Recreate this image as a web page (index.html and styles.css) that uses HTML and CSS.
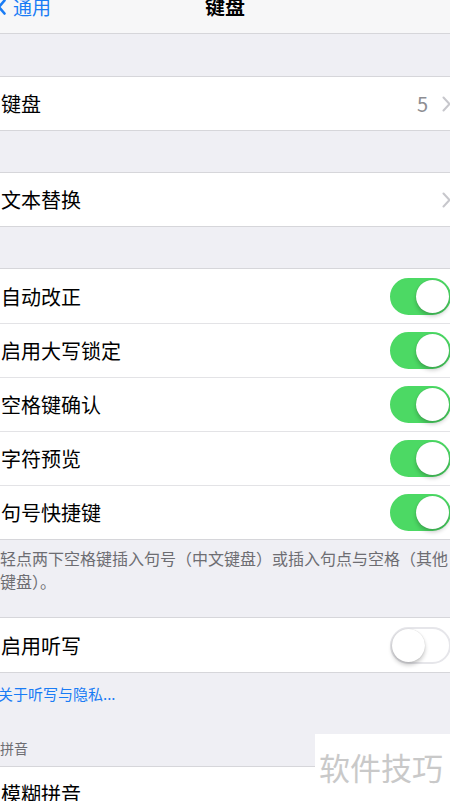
FILE: index.html
```html
<!DOCTYPE html>
<html lang="zh-CN">
<head>
    <meta charset="UTF-8" />
    <meta name="viewport" content="width=device-width, initial-scale=1.0">
    <title>键盘</title>
    <link rel="stylesheet" href="styles.css">
</head>
<body>
<div class="screen">
    <div class="nav">
        <div class="nav-back">
            <svg class="back-chevron" width="8" height="16" viewBox="0 0 8 16">
                <path d="M6.5 1.5 L1 8 L6.5 14.5" fill="none" stroke="#1a7cf5" stroke-width="2.6" stroke-linecap="round" stroke-linejoin="round"/>
            </svg>
            <span>通用</span>
        </div>
        <div class="nav-title">键盘</div>
    </div>

    <div class="group">
        <div class="row">
            <span class="label">键盘</span>
            <span class="value">5</span>
            <svg class="chevron" width="9" height="16" viewBox="0 0 9 16">
                <path d="M1.5 1.5 L7.5 8 L1.5 14.5" fill="none" stroke="#c7c7cc" stroke-width="2" stroke-linecap="round" stroke-linejoin="round"/>
            </svg>
        </div>
    </div>

    <div class="group">
        <div class="row">
            <span class="label">文本替换</span>
            <svg class="chevron" width="9" height="16" viewBox="0 0 9 16">
                <path d="M1.5 1.5 L7.5 8 L1.5 14.5" fill="none" stroke="#c7c7cc" stroke-width="2" stroke-linecap="round" stroke-linejoin="round"/>
            </svg>
        </div>
    </div>

    <div class="group switches">
        <div class="row">
            <span class="label">自动改正</span>
            <span class="switch on"><span class="knob"></span></span>
        </div>
        <div class="row">
            <span class="label">启用大写锁定</span>
            <span class="switch on"><span class="knob"></span></span>
        </div>
        <div class="row">
            <span class="label">空格键确认</span>
            <span class="switch on"><span class="knob"></span></span>
        </div>
        <div class="row">
            <span class="label">字符预览</span>
            <span class="switch on"><span class="knob"></span></span>
        </div>
        <div class="row">
            <span class="label">句号快捷键</span>
            <span class="switch on"><span class="knob"></span></span>
        </div>
    </div>
    <p class="footer">轻点两下空格键插入句号（中文键盘）或插入句点与空格（其他键盘）。</p>

    <div class="group tight switches">
        <div class="row">
            <span class="label">启用听写</span>
            <span class="switch"><span class="knob"></span></span>
        </div>
    </div>
    <a class="footer-link">关于听写与隐私...</a>

    <div class="section-header">拼音</div>
    <div class="group tight">
        <div class="row">
            <span class="label">模糊拼音</span>
        </div>
    </div>

    <div class="watermark">软件技巧</div>
</div>
</body>
</html>
```

FILE: styles.css
```css
* {
    box-sizing: border-box;
    margin: 0;
    padding: 0;
}
html, body {
    background: #efeff4;
}
body {
    font-family: "Noto Sans CJK SC", "Noto Sans", sans-serif;
    color: #000;
}
.screen {
    position: relative;
    width: 450px;
    height: 801px;
    overflow: hidden;
}

/* navigation bar */
.nav {
    position: relative;
    display: flex;
    align-items: flex-start;
    height: 34px;
    background: #f7f7f8;
    border-bottom: 1px solid #d6d6da;
}
.nav-back {
    display: flex;
    align-items: center;
    gap: 7px;
    height: 20px;
    margin-top: -3px;
    margin-left: -2px;
    color: #1a7cf5;
    font-size: 19px;
    line-height: 20px;
}
.back-chevron {
    flex: none;
}
.nav-title {
    position: absolute;
    top: -3px;
    left: 0;
    right: 0;
    text-align: center;
    font-size: 20px;
    line-height: 20px;
    font-weight: 700;
}

/* table groups */
.group {
    margin-top: 42px;
    background: #fff;
    border-top: 1px solid #d6d6da;
    border-bottom: 1px solid #d6d6da;
}
.group + .group {
    margin-top: 41px;
}
.group.tight {
    margin-top: 0;
}
.row {
    display: flex;
    align-items: center;
    height: 53px;
    padding-left: 1px;
    font-size: 20px;
}
.switches .row {
    height: 54px;
}
.row + .row {
    border-top: 1px solid #e3e3e6;
}
.label {
    flex: 1;
}
.value {
    color: #8e8e93;
    margin-right: 14px;
}
.chevron {
    flex: none;
    margin-right: -1px;
}

/* switches */
.switch {
    position: relative;
    flex: none;
    width: 61px;
    height: 37px;
    margin-right: -1px;
    border-radius: 19px;
    background: #fff;
    border: 2px solid #e6e6ea;
}
.switch.on {
    background: #4cd964;
    border-color: #4cd964;
}
.switch .knob {
    position: absolute;
    top: 0;
    left: 0;
    width: 33px;
    height: 33px;
    border-radius: 50%;
    background: #fff;
    box-shadow: 0 3px 4px rgba(0, 0, 0, 0.22), 0 0 1px rgba(0, 0, 0, 0.2);
}
.switch.on .knob {
    left: 24px;
}

/* footers and headers */
.footer {
    padding: 7px 2px 24px 0;
    color: #6d6d72;
    font-size: 16px;
    line-height: 23px;
}
.footer-link {
    display: block;
    padding-top: 11px;
    margin-left: -2px;
    color: #1a7cf5;
    font-size: 15px;
    line-height: 20px;
}
.section-header {
    padding-top: 35px;
    padding-bottom: 9px;
    color: #6d6d72;
    font-size: 14px;
    line-height: 18px;
}

/* watermark overlay */
.watermark {
    position: absolute;
    left: 315px;
    top: 734px;
    width: 135px;
    height: 62px;
    padding-top: 15px;
    padding-left: 4px;
    background: #fff;
    color: #c9c9c9;
    font-size: 31px;
    line-height: 36px;
}
```
